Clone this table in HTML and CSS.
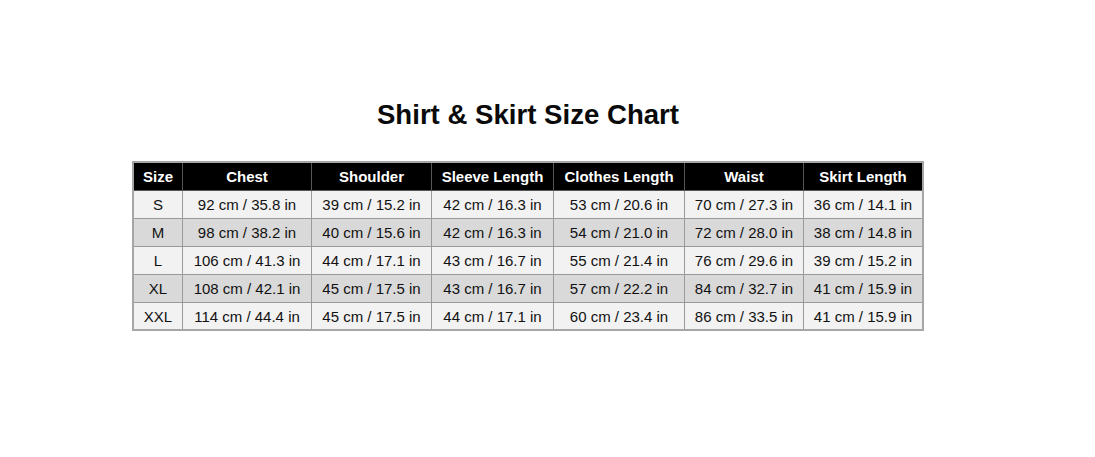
FILE: index.html
```html
<!DOCTYPE html>
<html>
<head>
<meta charset="utf-8">
<link rel="stylesheet" href="styles.css">
</head>
<body>
<div class="page">
  <h1 class="title">Shirt &amp; Skirt Size Chart</h1>
  <table class="chart">
    <thead>
      <tr>
        <th class="c-size">Size</th>
        <th class="c-chest">Chest</th>
        <th class="c-sh">Shoulder</th>
        <th class="c-sl">Sleeve Length</th>
        <th class="c-cl">Clothes Length</th>
        <th class="c-wa">Waist</th>
        <th class="c-sk">Skirt Length</th>
      </tr>
    </thead>
    <tbody>
      <tr><td>S</td><td>92 cm / 35.8 in</td><td>39 cm / 15.2 in</td><td>42 cm / 16.3 in</td><td>53 cm / 20.6 in</td><td>70 cm / 27.3 in</td><td>36 cm / 14.1 in</td></tr>
      <tr><td>M</td><td>98 cm / 38.2 in</td><td>40 cm / 15.6 in</td><td>42 cm / 16.3 in</td><td>54 cm / 21.0 in</td><td>72 cm / 28.0 in</td><td>38 cm / 14.8 in</td></tr>
      <tr><td>L</td><td>106 cm / 41.3 in</td><td>44 cm / 17.1 in</td><td>43 cm / 16.7 in</td><td>55 cm / 21.4 in</td><td>76 cm / 29.6 in</td><td>39 cm / 15.2 in</td></tr>
      <tr><td>XL</td><td>108 cm / 42.1 in</td><td>45 cm / 17.5 in</td><td>43 cm / 16.7 in</td><td>57 cm / 22.2 in</td><td>84 cm / 32.7 in</td><td>41 cm / 15.9 in</td></tr>
      <tr><td>XXL</td><td>114 cm / 44.4 in</td><td>45 cm / 17.5 in</td><td>44 cm / 17.1 in</td><td>60 cm / 23.4 in</td><td>86 cm / 33.5 in</td><td>41 cm / 15.9 in</td></tr>
    </tbody>
  </table>
</div>
</body>
</html>
```
FILE: styles.css
```css
html, body {
  margin: 0;
  padding: 0;
  background: #ffffff;
}
body {
  font-family: "Liberation Sans", Arial, sans-serif;
  color: #111;
}
.page {
  width: 1056px;
  padding-top: 99px;
  display: flex;
  flex-direction: column;
  align-items: center;
}
.title {
  margin: 0 0 30px 0;
  font-size: 27.6px;
  line-height: 32px;
  font-weight: bold;
  color: #0a0a0a;
}
.chart {
  border-collapse: collapse;
  font-size: 15px;
  border: 2px solid #a6a6a6;
}
.chart th, .chart td {
  border: 1px solid #9a9a9a;
  text-align: center;
  padding: 0;
  height: 27px;
  white-space: nowrap;
}
.chart th {
  background: #000;
  color: #fff;
  font-weight: bold;
  border-color: #555;
}
.chart tbody tr:nth-child(odd) td { background: #f2f2f2; }
.chart tbody tr:nth-child(even) td { background: #d9d9d9; }
.chart tbody tr:last-child td { height: 26px; }
.c-size { width: 48px; }
.c-chest { width: 128px; }
.c-sh { width: 119px; }
.c-sl { width: 121px; }
.c-cl { width: 130px; }
.c-wa { width: 118px; }
.c-sk { width: 118px; }
```
